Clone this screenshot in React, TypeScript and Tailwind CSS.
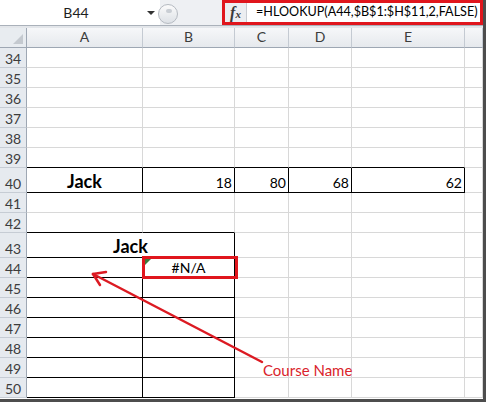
import React from "react";

const FONT = { fontFamily: "Lato, 'Noto Sans', sans-serif" };

const COLS = [
  { key: "A", w: 116 },
  { key: "B", w: 92 },
  { key: "C", w: 54 },
  { key: "D", w: 63 },
  { key: "E", w: 113 },
  { key: "F", w: 18 },
];

const ROWS = [34, 35, 36, 37, 38, 39, 40, 41, 42, 43, 44, 45, 46, 47, 48, 49, 50];

const TALL = [40, 43];

const row40: Record<string, string> = { B: "18", C: "80", D: "68", E: "62" };

function rightBlack(r: number, c: string) {
  if (r === 40 && c !== "F") return true;
  if (r >= 43 && r <= 50 && (c === "A" || c === "B")) return true;
  return false;
}

function bottomBlack(r: number, c: string) {
  if ((r === 39 || r === 40) && c !== "F") return true;
  if (r >= 42 && r <= 50 && (c === "A" || c === "B")) return true;
  return false;
}

function Cell({ r, c, w }: { r: number; c: string; w: number }) {
  const rb = rightBlack(r, c);
  const bb = bottomBlack(r, c);
  let content: React.ReactNode = null;
  let align = "justify-end pr-[2px]";
  if (r === 40 && c === "A") {
    content = <span className="text-[18px] font-bold text-black">Jack</span>;
    align = "justify-center";
  } else if (r === 40 && row40[c]) {
    content = <span className="text-[14px] text-black">{row40[c]}</span>;
  } else if (r === 44 && c === "B") {
    content = <span className="text-[14px] text-black">#N/A</span>;
    align = "justify-center";
  }
  return (
    <div
      className={`flex h-full shrink-0 items-end border-r border-b pb-[2px] leading-none ${align} ${
        rb ? "border-r-black" : "border-r-[#d8d8d8]"
      } ${bb ? "border-b-black" : "border-b-[#d8d8d8]"}`}
      style={{ width: w }}
    >
      {content}
    </div>
  );
}

function Row({ r }: { r: number }) {
  const h = TALL.includes(r) ? "h-[25px]" : "h-[20px]";
  return (
    <div className={`flex ${h}`}>
      <div className="flex w-[27px] shrink-0 items-end justify-center border-r border-b border-r-[#9ea7b3] border-b-[#c6ccd4] bg-[#e6eaef] pb-[1px] text-[14px] leading-none text-[#3c3c3c]">
        {r}
      </div>
      {r === 43 ? (
        <>
          <div className="flex h-full w-[208px] shrink-0 items-end justify-center border-r border-b border-r-black border-b-black pb-[2px] leading-none">
            <span className="text-[18px] font-bold text-black">Jack</span>
          </div>
          {COLS.slice(2).map((c) => (
            <Cell key={c.key} r={r} c={c.key} w={c.w} />
          ))}
        </>
      ) : (
        COLS.map((c) => <Cell key={c.key} r={r} c={c.key} w={c.w} />)
      )}
    </div>
  );
}

function Toolbar() {
  return (
    <div className="flex h-[26px] items-stretch border-b border-[#aab1ba] bg-[#eef0f3]">
      <div className="flex w-[160px] shrink-0 items-center bg-white">
        <div className="flex-1 pl-[8px] text-center text-[14px] text-[#1e1e1e]">B44</div>
        <svg width="10" height="6" viewBox="0 0 10 6" className="mr-[4px] ml-[2px]">
          <path d="M1 1 L9 1 L5 5 Z" fill="#333" />
        </svg>
      </div>
      <div className="relative w-[62px] shrink-0">
        <div className="absolute top-[4px] left-[-2px] h-[20px] w-[20px] rounded-full border border-[#b5bac1] bg-gradient-to-b from-[#fbfbfb] to-[#dde1e6]" />
        <div className="absolute top-[9px] left-[6px] h-[4px] w-[6px] rounded-full bg-[#c9ced4]" />
      </div>
      <div className="flex min-w-0 flex-1 items-stretch border-[3px] border-[#e0161d] bg-white">
        <div className="flex w-[22px] shrink-0 items-center justify-center border-r border-[#c8ccd2] bg-[#eceef1]">
          <span
            className="text-[16px] font-bold italic leading-none text-[#3a3a3a]"
            style={{ fontFamily: "'Liberation Serif', serif" }}
          >
            f<span className="text-[11px]">x</span>
          </span>
        </div>
        <div className="flex min-w-0 flex-1 items-center whitespace-nowrap pl-[9px] text-[12.6px] text-black">
          =HLOOKUP(A44,$B$1:$H$11,2,FALSE)
        </div>
      </div>
    </div>
  );
}

function HeaderRow() {
  return (
    <div className="flex h-[20px]">
      <div className="relative w-[27px] shrink-0 border-r border-b border-r-[#9ea7b3] border-b-[#9ea7b3] bg-[#e8ecf0]">
        <svg width="10" height="10" viewBox="0 0 10 10" className="absolute right-[3px] bottom-[3px]">
          <path d="M10 0 L10 10 L0 10 Z" fill="#c4c9cf" />
        </svg>
      </div>
      {COLS.map((c) => (
        <div
          key={c.key}
          className="flex shrink-0 items-end justify-center border-r border-b border-r-[#c4cad2] border-b-[#9ea7b3] bg-gradient-to-b from-[#f6f7f9] to-[#e6e9ed] pb-[3px] text-[14px] leading-none text-[#3c3c3c]"
          style={{ width: c.w }}
        >
          {c.key === "F" ? "" : c.key}
        </div>
      ))}
    </div>
  );
}

export default function App() {
  return (
    <div className="h-[404px] w-[488px] bg-white" style={FONT}>
      <div className="relative h-[402px] w-[486px] overflow-hidden border-r-[3px] border-b-[3px] border-[#4d4d4d] bg-white">
        <Toolbar />
        <div className="h-[2px] bg-[#e3e6ea]" />
        <HeaderRow />
        {ROWS.map((r) => (
          <Row key={r} r={r} />
        ))}

        {/* selected cell B44 */}
        <div className="absolute top-[256px] left-[142px] h-[23px] w-[96px] border-[3px] border-[#e0161d]">
          <svg width="6" height="6" viewBox="0 0 6 6" className="absolute top-0 left-0">
            <path d="M0 0 L6 0 L0 6 Z" fill="#3d7a3d" />
          </svg>
        </div>

        {/* annotation arrow */}
        <svg className="pointer-events-none absolute top-0 left-0" width="486" height="402">
          <g stroke="#dc1a22" strokeWidth="2.5" strokeLinecap="round" fill="none">
            <line x1="262" y1="362" x2="93" y2="274" />
            <line x1="93" y1="274" x2="106" y2="272" />
            <line x1="93" y1="274" x2="100" y2="285" />
          </g>
        </svg>
        <div className="absolute top-[361px] left-[263px] text-[15px] leading-[1.2] text-[#d9232b]">
          Course Name
        </div>
      </div>
    </div>
  );
}
